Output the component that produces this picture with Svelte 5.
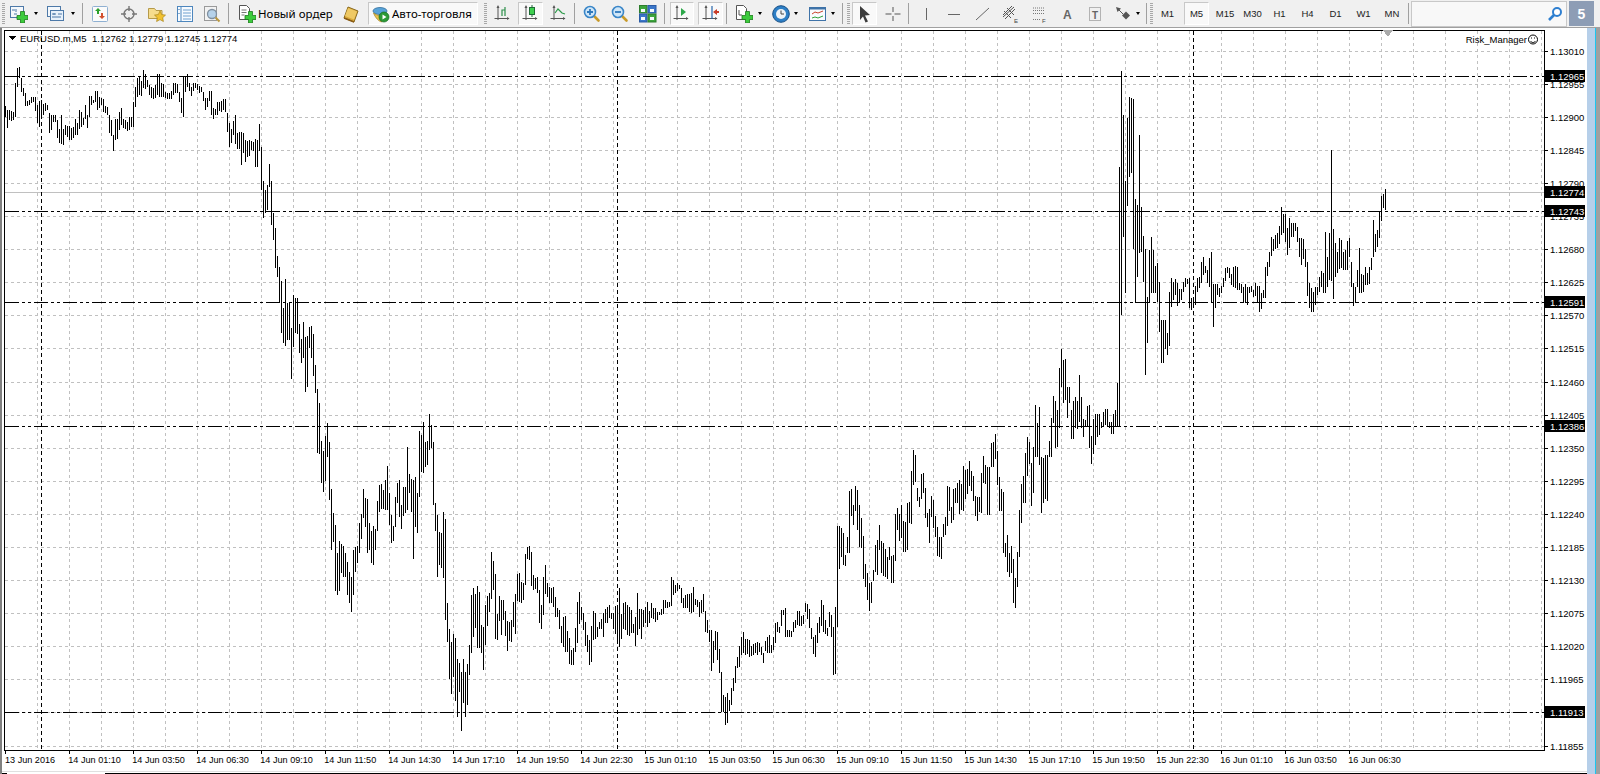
<script>
  // Bars as read from the reference: first bar x, y origin, then "high low" pairs in 3x units.
  const segments = [
    { x: 5, o: 60, d: "138 172 150 204 150 180 152 182 155 180 68 172 24 80 20 54 55 95 85 108 100 138 122 138 120 135 112 128 110 126 112 152 135 190 122 200 120 168 132 165 128 152 135 150 160 220 165 210 165 185 165 185 180 235 208 248 165 252 208 255 195 225 198 232 198 240 205 240 200 235 178 225 188 225 150 208 155 200 175 195 135 178 165 205 108 170 108 135 120 128 92 125 92 150 112 145 115 135 118 155 138 160 140 165 165 218 180 228 225 272 178 240 178 238 155 210 145 195 178 205 180 208 185 212 170 210 170 202 125 200 82 140 55 112 52 105 62 108 30 85 42 88 60 80 75 105 82 115 85 118 75 115 42 105 42 110 68 110 72 112 95 115 98 118 100 118 92 118 68 105 68 100 72 98 95 125 115 158 48 170 48 95 42 80 68 92 80 108 70 92 68 85 72 90 78 98 82 95 95 122 115 150 115 140 92 122 92 165 145 178 148 165 125 165 125 152 122 155 118 150 118 155 158 215 188 262 208 250 182 225 165 252 218 268 215 268 215 315 218 280 240 305 242 290 240 288 242 270 245 272 238 322 240 322 192 272 262 388" },
    { x: 261, o: 130, d: "50 180 152 265 180 250 165 240 102 170 152 285 250 330 295 415 378 440 412 515 452 610 535 638 448 648 518 630 518 630 595 746 495 650 505 610 505 612 582 670 628 698 577 684 620 785 618 772 592 654 588 684 612 738 706 790 778 970 820 972 934 1060 964 1085 918 1052 880 982 936 1110 1078 1260 1150 1235 1186 1382 1270 1396 1234 1382 1242 1330 1248 1340 1270 1340 1296 1395 1326 1420 1340 1445 1260 1396 1250 1325 1248 1298 1180 1268 1152 1228 1078 1165 1105 1190 1108 1268 1180 1260 1202 1300 1188 1304 1196 1260 1114 1202 1065 1145 1062 1136 1080 1138 1050 1140 1008 1140 1088 1185 1155 1240 1188 1232 1100 1190 1060 1120 1050 1162 1125 1198 1072 1158 1070 1150 952 1140 1032 1090 1048 1145 1050 1286 1040 1190 1090 1210 904 1102 916 1025 876 1030 936 1010 934 1005 852 960 884 955 936 1126 1120 1202 1155 1340 1205 1305 1210 1315 1146 1345 1166 1470" },
    { x: 447, o: 520, d: "250 365 328 476 366 522 342 470 355 542 418 592 430 515 456 632 418 550 455 590 432 554 376 466 225 398 204 352 222 325 198 385 215 385 315 398 322 450 255 375 228 318 220 276 96 238 124 210 162 356 282 360 228 302 240 344 240 300 274 348 302 392 306 362 300 365 245 320 222 342 162 242 158 246 185 248 190 240 102 196 80 118 78 120 96 198 166 210 175 208 172 218 210 308 255 326 172 285 135 222 190 230 200 250 205 248 202 262 232 290 264 292 270 326 318 370 290 382 288 396 332 395 355 432 390 434 385 434 325 396 246 368 216 312 262 300 278 330 305 378 345 395 360 434 318 425 272 360 280 358 320 352 305 328 298 328 280 352 266 310 262 310 255 295 280 298 280 328 258 342 255 362 205 382 282 358 250 326 245 330 255 345 262 348 270 340 312 340 290 378 220 345 266 328 268 358 270 322 262 310 245 320 272 308 248 295 265 296 265 305 275 300 275 285 268 285 240 282 240 265 245 265 245 260 172 258 180 225 196 218 190 212 195 208 205 248 235 265 225 265 222 265 222 275 220 278 200 275 238 255 240 262 245 290 240 280 222 275 272 335 300 338 330 365 330 452 362 430 332 390 335 420 388 458 456 575 525 575 530 616 520 608 540 574 504 555 475 512 438 490 410 445 378 440 352 405 335 398 358 405 358 402 360 410 378 408 372 405 368 398 366 405 368 395 380 405 398 430 362 392 350 400 345 398 375 398 352 390 308 370 306 335 320 338 270 318 270 285 265 350 330 352 330 352 332 352 305 335 300 325 272 315 272 318 288 318 285 312 248 275 252 298 268 325 325 356 350 402 345 412 310 368 290 340 240 318 255 335 300 342 325 348 275 320 285 350 320 466 262 462" },
    { x: 837, o: 340, d: "558 860 558 686 564 650 580 675 645 678 590 640 452 640 447 528 495 556 438 512 450 570 495 622 535 625 588 716 672 742 700 780 730 812 725 790 690 722 615 695 600 706 555 630 602 700 610 708 628 712 652 716 622 660 648 730 645 730 522 662 504 570 522 602 496 594 544 635 545 635 490 630 486 548 392 552 330 434 346 425 445 484 470 502 402 478 400 458 445 535 518 560 508 608 468 530 480 565 528 590 562 648 590 650 590 656 552 592 532 585 438 558 440 512 500 550 446 540 445 490 430 488 420 522 432 510 378 512 390 476 388 462 362 438 392 454 408 482 468 528 470 542 470 515 400 518 348 430 375 432 380 525 382 525 310 382 305 380 282 358 332 435 412 514 448 512 455 638 610 650 585 696 640 710 618 698 658 790 714 804 636 740 510 650 432 550 408 490 340 490 292 408 305 372 370 498 322 458 195 350 248 350 200 375 350 520 355 490 345 478 345 482 302 350 235 350 168 248 182 325 210 320 85 265 28 140 60 190 58 180 140 235 140 188 210 296 182 296 170 265 182 268 105 245 170 265 238 292 240 262 198 262 195 325 288 372 238 342 222 315 222 292 222 285 245 265 215 262 208 255 208 262 245 265 245 282 222 282 210 258" },
    { x: 1117, o: 60, d: "968 1098 322 1098 34 765 165 530 362 698 175 438 112 352 115 338 118 566 418 728 435 650 225 580 440 575 528 665 568 945 710 848 570 725 532 698 570 700 618 700 610 725 665 815 780 908 780 908 780 868 820 885 695 858 655 742 665 720 658 705 668 738 688 730 688 720 665 695 655 680 658 672 655 745 715 750 712 745 678 735 655 695 650 685 605 670 590 645 618 638 630 668 595 682 576 725 672 800 672 745 672 705 685 710 678 700 655 680 625 662 620 640 625 655 642 675 620 682 618 685 620 690 670 690 672 700 680 730 672 728 680 735 682 700 678 695 690 710 670 708 678 728 678 755 700 748 690 715 620 715 605 648 575 622 532 588 538 572 525 568 518 565 498 552 440 525 462 520 462 545 505 585 475 565 490 532 490 530 490 512 502 545 535 592 535 615 538 598 568 622 605 708 668 745 685 755 695 755 680 735 680 705 650 695 632 680 640 698 515 700 590 680 518 660 270 662 508 718 548 652 575 640 535 628 540 625 575 630 570 630 542 630 535 590 605 680 668 738 680 730 630 680 565 700 642 700 645 695 622 675 640 675 622 672 595 630 480 592 522 575 510 560 455 535 408 482 402 445 388 450" }
  ];

  function buildBars() {
    let d = "";
    for (const s of segments) {
      const v = s.d.split(" ").map(Number);
      for (let i = 0; i < v.length; i += 2) {
        const x = s.x + i + 0.5;
        const y1 = Math.round(s.o + v[i] / 3);
        const y2 = Math.round(s.o + v[i + 1] / 3);
        d += `M${x} ${y1}V${y2}`;
      }
    }
    return d;
  }
  const barsPath = buildBars();

  const AXIS = 1544;
  const priceY = (p) => 50.5 + ((1.1301 - p) / 0.00055) * 33.1;
  const ticks = Array.from({ length: 22 }, (_, i) => {
    const p = 1.1301 - i * 0.00055;
    return { label: p.toFixed(5), y: Math.round(priceY(p)) + 0.5 };
  });
  const gridV = Array.from({ length: 48 }, (_, i) => 37.5 + 32 * i);
  const levels = [
    { label: "1.12965", y: 76.5 },
    { label: "1.12743", y: 211.5 },
    { label: "1.12591", y: 302.5 },
    { label: "1.12386", y: 426.5 },
    { label: "1.11913", y: 712.5 }
  ];
  const marks = [41.5, 617.5, 1193.5];
  const times = ["13 Jun 2016","14 Jun 01:10","14 Jun 03:50","14 Jun 06:30","14 Jun 09:10","14 Jun 11:50","14 Jun 14:30","14 Jun 17:10","14 Jun 19:50","14 Jun 22:30","15 Jun 01:10","15 Jun 03:50","15 Jun 06:30","15 Jun 09:10","15 Jun 11:50","15 Jun 14:30","15 Jun 17:10","15 Jun 19:50","15 Jun 22:30","16 Jun 01:10","16 Jun 03:50","16 Jun 06:30"];

  // Toolbar, left to right: [kind, width, pressed?]; numbers alone are blank space.
  const tools = [
    2,["grip",3],["newchart",28],["drop",5],4,["profile",28],["drop",5],7,["sep",2],1,
    ["experts",29],["nav",29],["fav",28],["list",27],["zoomdoc",28],2,["sep",2],2,
    ["order",103],["book",31],2,["auto",110,true],6,["grip",3],2,
    ["bars",28],1,["candles",25,true],2,["line",28],1,["sep",2],2,
    ["zoomin",28],["zoomout",28],["tile",28],2,["sep",2],4,
    ["scroll",24,true],4,["shift",25,true],3,["sep",2],3,
    ["indicators",26],["drop",5],7,["clock",24],["drop",5],8,["template",24],["drop",5],7,["sep",2],3,
    ["grip",3],2,["cursor",25,true],2,["cross",27],2,["sep",2],2,
    ["vline",28],["hline",28],1,["trend",28],["channel",28],["fibo",28],["A",28],["T",27],3,["arrows",24],["drop",5],6,["sep",2],2,
    ["grip",3],
    ["M1",29],2,["M5",25,true],2,["M15",28],["M30",27],["H1",27],["H4",29],["D1",27],["W1",29],["MN",28],2,["sep",2]
  ];
  const periods = ["M1","M5","M15","M30","H1","H4","D1","W1","MN"];
</script>

{#snippet plus()}
  <path d="M10.500 6.500h4v4h3.500v4h-3.500v3.500h-4V14.500H7v-4h3.500z" fill="#3ccb3c" stroke="#1d7a1d" stroke-width=".8"/>
{/snippet}

{#snippet axes()}
  <path d="M4 1.500V15M0.500 13.500H15" stroke="#555" fill="none"/>
  <path d="M4 0L2.500 3h3zM15.500 13.500L13 12v3z" fill="#555"/>
{/snippet}

{#snippet lens(sign)}
  <path d="M10.500 10.500l5 5" stroke="#c89a28" stroke-width="2.600" stroke-linecap="round"/>
  <circle cx="7" cy="7" r="5.500" fill="#cfe6f8" stroke="#3a86c8" stroke-width="1.600"/>
  <path d={sign === "+" ? "M4 7h6M7 4v6" : "M4 7h6"} stroke="#2f79bb" stroke-width="1.800"/>
{/snippet}

{#snippet icon(k)}
  <svg class="ico" viewBox="0 0 18 18" width="18" height="18">
    {#if k === "newchart"}
      <rect x=".5" y="1.500" width="13" height="11" fill="#f4f8fc" stroke="#4d79a8"/>
      <path d="M2 5h3M6 4v3M4 9h3" stroke="#4d79a8"/>
      {@render plus()}
    {:else if k === "profile"}
      <rect x=".5" y="1.500" width="13" height="10" fill="#f4f8fc" stroke="#4d79a8"/>
      <rect x="3.500" y="5.500" width="13" height="10" fill="#e6f0fa" stroke="#4d79a8"/>
      <path d="M5 9h4M11 9h4M5 12h9M7 8v2" stroke="#4d79a8"/>
    {:else if k === "experts"}
      <rect x="1.500" y="1.500" width="15" height="15" rx="1" fill="#fbfbfb" stroke="#8fb0d2"/>
      <path d="M7 3l3 3H8v3H6V6H4z" fill="#2ca02c"/>
      <path d="M11 14l-3-3h2V8h2v3h2z" fill="#d2502d"/>
    {:else if k === "nav"}
      <circle cx="9" cy="9" r="5" fill="#eee" stroke="#777" stroke-width="1.400"/>
      <path d="M9 1v5M9 12v5M1 9h5M12 9h5" stroke="#777" stroke-width="1.400"/>
    {:else if k === "fav"}
      <path d="M.5 3.500h6l1.500 2h6v8H.5z" fill="#f6dc8c" stroke="#b59a4a"/>
      <path d="M12 6l1.700 3.600 3.800.5-2.800 2.600.7 3.800-3.400-1.900-3.400 1.900.7-3.800-2.800-2.600 3.800-.5z" fill="#f2c230" stroke="#a9851d" stroke-width=".7"/>
    {:else if k === "list"}
      <rect x="1.500" y="1.500" width="15" height="15" fill="#f7fbff" stroke="#4d86bd"/>
      <path d="M5 2v14" stroke="#4d86bd"/>
      <path d="M7 5h8M7 8h8M7 11h8M7 14h8" stroke="#6ea0cf"/>
      <path d="M2.500 4.500h1M2.500 8.500h1" stroke="#1d5f9e"/>
    {:else if k === "zoomdoc"}
      <rect x="1.500" y="1.500" width="12" height="14" fill="#f2f2f2" stroke="#9a9a9a"/>
      <circle cx="9" cy="9" r="4.500" fill="#b6d2ea" stroke="#7f8f9f" stroke-width="1.300"/>
      <path d="M12.500 12.500l4 4" stroke="#b9973f" stroke-width="2"/>
    {:else if k === "orderdoc"}
      <path d="M1.500 .5h7l3 3v11h-10z" fill="#fff" stroke="#555"/>
      <path d="M3.500 5h5M3.500 7.500h5M3.500 10h3" stroke="#777"/>
      {@render plus()}
    {:else if k === "book"}
      <path d="M6 2l10 4-4 11-10-4z" fill="#d9a93c" stroke="#8a6a1c"/>
      <path d="M6 3l9 3.500-3 8-9-3.500z" fill="#efc964"/>
      <path d="M2 13l10 4" stroke="#8a5b14" stroke-width="1.400"/>
    {:else if k === "autoicon"}
      <ellipse cx="8" cy="6" rx="7" ry="3.500" fill="#58a3d8" stroke="#326f9c" stroke-width=".8"/>
      <path d="M1.500 8c2 5 5 8 8 9l5-6c-4 .5-9 0-13-3z" fill="#e9c34b" stroke="#9a7c1f" stroke-width=".7"/>
      <circle cx="12" cy="12" r="5" fill="#2c9a35" stroke="#146b1f" stroke-width=".7"/>
      <path d="M10.500 9.500l4 2.500-4 2.500z" fill="#fff"/>
    {:else if k === "bars"}
      {@render axes()}
      <path d="M8 11V5h3M11 2v9" stroke="#2c8f4a" stroke-width="1.200" fill="none"/>
    {:else if k === "candles"}
      {@render axes()}
      <path d="M10 0v12" stroke="#1f6b36"/>
      <rect x="7.500" y="2.500" width="5" height="7" fill="#3ed04e" stroke="#1f6b36"/>
    {:else if k === "line"}
      {@render axes()}
      <path d="M5 8l3-4 4 4 3 1" stroke="#2c9a4a" fill="none" stroke-width="1.200"/>
    {:else if k === "zoomin"}
      {@render lens("+")}
    {:else if k === "zoomout"}
      {@render lens("-")}
    {:else if k === "tile"}
      <rect x=".5" y=".5" width="7.500" height="7.500" fill="#3da63d" stroke="#2d7d2d"/>
      <rect x="9" y=".5" width="8" height="7.500" fill="#3b76c9" stroke="#2a5ba5"/>
      <rect x=".5" y="9" width="7.500" height="8" fill="#3b76c9" stroke="#2a5ba5"/>
      <rect x="9" y="9" width="8" height="8" fill="#3da63d" stroke="#2d7d2d"/>
      <path d="M2 4h4v3H2zM11 4h4v3h-4zM2 12h4v3H2zM11 12h4v3h-4z" fill="#f5fafc"/>
    {:else if k === "scroll"}
      {@render axes()}
      <path d="M8 3l5 4-5 4z" fill="#2da84a"/>
    {:else if k === "shift"}
      {@render axes()}
      <path d="M10 1v13" stroke="#2563a8" stroke-width="1.200"/>
      <path d="M11 7l4-3v2h2v2h-2v2z" fill="#c83c28"/>
    {:else if k === "indicators"}
      <path d="M1.500 .5h7l3 3v11h-10z" fill="#fff" stroke="#555"/>
      <path d="M4 5v5h3" stroke="#555" fill="none"/>
      {@render plus()}
    {:else if k === "clock"}
      <circle cx="9" cy="9" r="8.300" fill="#2d7fc6" stroke="#174f86"/>
      <circle cx="9" cy="9" r="5" fill="#eef3f7"/>
      <path d="M9 5.500V9h3" stroke="#444" fill="none"/>
    {:else if k === "template"}
      <rect x=".5" y="2.500" width="16" height="13" fill="#f8fbff" stroke="#3f73a8"/>
      <path d="M1 3.500h15" stroke="#3f73a8" stroke-width="2"/>
      <path d="M3 9l3-2 3 1 5-2" stroke="#c9452d" fill="none"/>
      <path d="M3 13l3-1 3 1 5-2" stroke="#2ea03a" fill="none"/>
    {:else if k === "cursor"}
      <path d="M4 1l10 9-5 .5 3 6-2.500 1-2.500-6L4 15z" fill="#3c3c3c"/>
    {:else if k === "cross"}
      <path d="M9 2v5M9 11v5M1.500 9h6M10.500 9h6" stroke="#555"/>
    {:else if k === "vline"}
      <path d="M9.500 3v12" stroke="#666"/>
    {:else if k === "hline"}
      <path d="M3 9.500h12" stroke="#666"/>
    {:else if k === "trend"}
      <path d="M2 15L15 3" stroke="#666"/>
    {:else if k === "channel"}
      <path d="M1 10L10 1M3 14L13 4M2 6l7 7M5 3l7 7M1 12L12 2" stroke="#555" fill="none"/>
      <text x="12" y="17.500" class="mini">E</text>
    {:else if k === "fibo"}
      <path d="M3 3h12M3 5.500h12M3 8.500h12M3 14.500h7" stroke="#777" stroke-dasharray="1 1"/>
      <text x="12" y="17.500" class="mini">F</text>
    {:else if k === "A"}
      <text x="5" y="14" class="letter">A</text>
    {:else if k === "T"}
      <rect x="3.500" y="2.500" width="11" height="13" fill="none" stroke="#777" stroke-dasharray="1 1"/>
      <text x="6" y="13.500" class="letter small">T</text>
    {:else if k === "arrows"}
      <path d="M2 2l5 1.500-3.500 3.500z" fill="#555"/>
      <path d="M5 5l4 4" stroke="#555"/>
      <path d="M12 6.500l4 4-4 4-4-4z" fill="#555"/>
    {/if}
  </svg>
{/snippet}

<div class="app">
  <header class="toolbar">
    {#each tools as t}
      {#if typeof t === "number"}
        <span class="blank" style:width="{t}px"></span>
      {:else if t[0] === "grip"}
        <span class="grip" style:width="{t[1]}px"></span>
      {:else if t[0] === "sep"}
        <span class="sep" style:width="{t[1]}px"></span>
      {:else if t[0] === "drop"}
        <span class="drop" style:width="{t[1]}px"><i></i></span>
      {:else}
        <span class="tool" class:pressed={t[2]} class:order={t[0] === "order"} class:auto={t[0] === "auto"} style:width="{t[1]}px">
          {#if periods.includes(t[0])}
            <span class="period">{t[0]}</span>
          {:else if t[0] === "order"}
            {@render icon("orderdoc")}<span class="caption">Новый ордер</span>
          {:else if t[0] === "auto"}
            {@render icon("autoicon")}<span class="caption">Авто-торговля</span>
          {:else}
            {@render icon(t[0])}
          {/if}
        </span>
      {/if}
    {/each}
    <span class="search">
      <svg viewBox="0 0 16 16" width="16" height="16">
        <circle cx="10" cy="6" r="4" fill="#fff" stroke="#2e7fd0" stroke-width="2"/>
        <path d="M7 9l-5 5" stroke="#2e7fd0" stroke-width="2.600"/>
      </svg>
    </span>
    <span class="badge">5</span>
  </header>

  <main class="workspace">
    <div class="strip"></div>
    <svg class="chart" viewBox="2 28 1585 746" width="1585" height="746">
      <rect x="2" y="28" width="1585" height="746" fill="#fff"/>
      <g class="grid">
        {#each ticks as t}
          <path d="M5 {t.y}H{AXIS}"/>
        {/each}
        {#each gridV as x}
          <path d="M{x} 31V750"/>
        {/each}
        <path class="last" d="M5 192.500H{AXIS}"/>
      </g>
      <path class="bars" d={barsPath}/>
      <g class="levels">
        {#each levels as l}
          <path d="M5 {l.y}H{AXIS}"/>
        {/each}
      </g>
      <g class="marks">
        {#each marks as x}
          <path d="M{x} 31V750"/>
        {/each}
      </g>

      <path class="frame" d="M4.500 30V750.500M4 30.500H1544.500V750.500H4"/>
      <path d="M1383 30h10l-5 7z" fill="#aaa"/>
      <path d="M8 36h8l-4 4z" fill="#000"/>

      {#each ticks as t}
        <path class="tick" d="M1544 {t.y}h4"/>
        <text class="t" x="1550" y={t.y + 3}>{t.label}</text>
      {/each}
      <rect x="1545" y="186" width="40" height="12" fill="#000"/>
      <text class="t w" x="1550" y="195.500">1.12774</text>
      {#each levels as l}
        <rect x="1545" y={l.y - 6.500} width="40" height="12" fill="#000"/>
        <text class="t w" x="1550" y={l.y + 3}>{l.label}</text>
      {/each}

      {#each times as label, i}
        <path class="tick" d="M{5.500 + 64 * i} 750v4"/>
        <text class="t d" x={i === 0 ? 5 : 4.300 + 64 * i} y="763">{label}</text>
      {/each}

      <text class="t" x="20" y="42">EURUSD.m,M5</text>
      <text class="t" x="92" y="42">1.12762 1.12779 1.12745 1.12774</text>
      <text class="t" x="1527" y="43" text-anchor="end">Risk_Manager</text>
      <g class="smile">
        <circle cx="1533" cy="39.500" r="4.500"/>
        <path d="M1530.500 41c1 2 4 2 5 0M1531.500 37.500v1M1534.500 37.500v1"/>
      </g>

      <path d="M2 771h1585" stroke="#e0e0e0"/>
      <path d="M2 773.500h5M105 773.500H1587" stroke="#000"/>
    </svg>
    <div class="rail"></div>
    <div class="edge"></div>
  </main>
</div>

<style>
  :global(body) { margin: 0; background: #fff; }
  .app {
    width: 1600px;
    height: 774px;
    overflow: hidden;
    display: flex;
    flex-direction: column;
    font-family: "Liberation Sans", Arial, sans-serif;
  }
  .toolbar {
    height: 27px;
    display: flex;
    align-items: stretch;
    flex: none;
    background: #f0f0f0;
    border-bottom: 1px solid #a0a0a0;
  }
  .blank, .grip, .sep, .drop, .tool { flex: none; }
  .grip {
    margin: 3px 0;
    background: repeating-linear-gradient(to bottom, #a8a8a8 0 1px, transparent 1px 2px);
  }
  .sep { position: relative; }
  .sep::after {
    content: "";
    position: absolute;
    left: 0;
    top: 3px;
    bottom: 3px;
    width: 1px;
    background: #a0a0a0;
  }
  .drop { display: flex; align-items: center; justify-content: center; }
  .drop i {
    width: 0;
    height: 0;
    border-left: 2.500px solid transparent;
    border-right: 2.500px solid transparent;
    border-top: 3px solid #000;
  }
  .tool {
    display: flex;
    align-items: center;
    justify-content: center;
    box-sizing: border-box;
    margin: 2px 0;
    font-size: 12px;
    color: #000;
  }
  .tool.order { justify-content: flex-start; padding-left: 6px; }
  .tool.auto { justify-content: flex-start; padding-left: 3px; }
  .tool.pressed {
    background: #f9f9f9;
    border: 1px solid #c8c8c8;
    border-right-color: #fff;
    border-bottom-color: #fff;
  }
  .ico { flex: none; }
  .caption {
    margin-left: 2px;
    white-space: nowrap;
    font-family: "Noto Sans", "Liberation Sans", sans-serif;
    font-size: 11.500px;
  }
  .period { font-size: 9.500px; color: #222; }
  .mini { font: 6px "Liberation Sans", sans-serif; fill: #444; }
  .letter { font: bold 12px "Liberation Sans", sans-serif; fill: #666; }
  .letter.small { font-size: 10px; }
  .search {
    flex: 1;
    margin: 1px 2px 0 1px;
    display: flex;
    align-items: center;
    justify-content: flex-end;
    padding-right: 3px;
    background: #f8f8f8;
    border: 1px solid #c8c8c8;
    box-sizing: border-box;
  }
  .badge {
    flex: none;
    width: 25px;
    margin: 1px 6px 1px 0;
    display: flex;
    align-items: center;
    justify-content: center;
    background: #8d9db5;
    color: #fff;
    font: bold 14px "Liberation Sans", sans-serif;
  }
  .workspace { display: flex; height: 746px; flex: none; }
  .strip { width: 2px; flex: none; background: #808080; }
  .chart { flex: none; display: block; shape-rendering: crispEdges; }
  .rail {
    width: 8px;
    flex: none;
    background: #b6cfe9;
    border-right: 1px solid #1ac6f0;
  }
  .edge { flex: 1; background: #a0a0a0; }
  .grid path { stroke: #c0c0c0; stroke-dasharray: 3 3; fill: none; }
  .grid path.last { stroke-dasharray: none; }
  .bars { stroke: #000; fill: none; }
  .levels path { stroke: #000; stroke-dasharray: 14 3 3 3 3 3; fill: none; }
  .marks path { stroke: #000; stroke-dasharray: 4 3; fill: none; }
  .frame { stroke: #000; fill: none; }
  .tick { stroke: #000; }
  .t { font: 9.500px "Liberation Sans", Arial, sans-serif; fill: #000; shape-rendering: auto; }
  .t.d { font-size: 9.100px; }
  .t.w { fill: #fff; }
  .smile { shape-rendering: auto; }
  .smile circle, .smile path { stroke: #000; fill: none; }
</style>
